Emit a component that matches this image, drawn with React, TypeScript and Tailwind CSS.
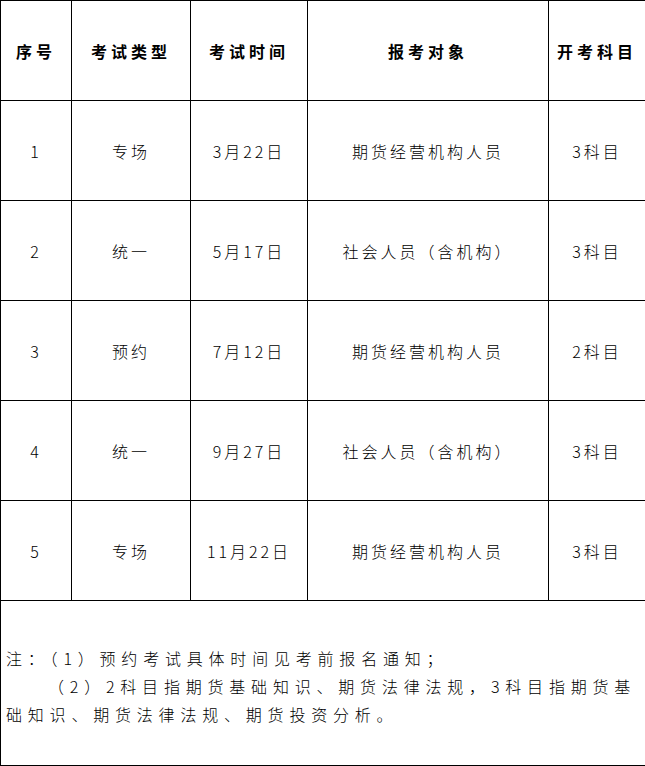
import React from "react";

const rows = [
  ["1", "专场", "3月22日", "期货经营机构人员", "3科目"],
  ["2", "统一", "5月17日", "社会人员（含机构）", "3科目"],
  ["3", "预约", "7月12日", "期货经营机构人员", "2科目"],
  ["4", "统一", "9月27日", "社会人员（含机构）", "3科目"],
  ["5", "专场", "11月22日", "期货经营机构人员", "3科目"],
];

const font = { fontFamily: '"Noto Sans CJK SC", "Liberation Serif", serif' };

export default function App() {
  return (
    <div className="w-[645px] h-[766px] bg-white text-black" style={font}>
      <table className="w-[645px] border-collapse table-fixed">
        <colgroup>
          <col className="w-[71px]" />
          <col className="w-[119px]" />
          <col className="w-[117px]" />
          <col className="w-[241px]" />
          <col className="w-[97px]" />
        </colgroup>
        <thead>
          <tr className="h-[100px]">
            {["序号", "考试类型", "考试时间", "报考对象", "开考科目"].map((h) => (
              <th key={h} className="border border-black text-center text-[16px] font-bold tracking-[4px] p-0">
                {h}
              </th>
            ))}
          </tr>
        </thead>
        <tbody>
          {rows.map((r) => (
            <tr key={r[0]} className="h-[100px]">
              {r.map((c, i) => (
                <td key={i} className="border border-black text-center text-[16px] font-light tracking-[3px] p-0">
                  {c}
                </td>
              ))}
            </tr>
          ))}
          <tr className="h-[165px]">
            <td colSpan={5} className="border border-black p-0 pl-[5px] pt-[5px] text-[16px] font-light leading-[28px] tracking-[5.8px] whitespace-nowrap">
              注：（1）预约考试具体时间见考前报名通知；
              <br />
              <span className="pl-[42px]">（2）2科目指期货基础知识、期货法律法规，3科目指期货基</span>
              <br />
              础知识、期货法律法规、期货投资分析。
            </td>
          </tr>
        </tbody>
      </table>
    </div>
  );
}
